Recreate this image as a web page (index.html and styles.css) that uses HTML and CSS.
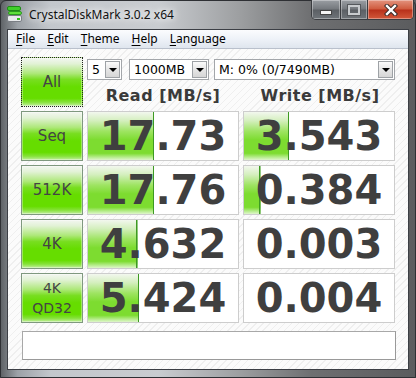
FILE: index.html
```html
<!DOCTYPE html>
<html>

<head>
    <title>CrystalDiskMark 3.0.2 x64</title>
    <link rel="stylesheet" href="styles.css">
</head>

<body>

    <div class="window">
        <div class="titlebar">
            <svg class="app-icon" width="16" height="16" viewBox="0 0 16 16">
                <rect x="0.5" y="0.5" width="13" height="4" rx="1.5" fill="#3fcf2a" stroke="#1f8a18" stroke-width="1"/>
                <rect x="1.5" y="5.5" width="13" height="3" rx="1.5" fill="#5fe03a" stroke="#2a9a1f" stroke-width="1"/>
                <rect x="0.5" y="9.5" width="14" height="6" rx="1.5" fill="#e8eaec" stroke="#7a7e84" stroke-width="1"/>
                <rect x="10" y="12" width="3" height="2" fill="#31c21d"/>
            </svg>
            <span class="title">CrystalDiskMark 3.0.2 x64</span>
            <div class="caption">
                <span class="cap-btn min"><i></i></span>
                <span class="cap-btn max"><i></i></span>
                <span class="cap-btn close">
                    <svg width="14" height="12" viewBox="0 0 14 12">
                        <path d="M3 2 L11 10 M11 2 L3 10" stroke="#3a2a28" stroke-width="4.4" stroke-linecap="square"/>
                        <path d="M3 2 L11 10 M11 2 L3 10" stroke="#ffffff" stroke-width="2.4" stroke-linecap="square"/>
                    </svg>
                </span>
            </div>
        </div>

        <div class="frame">
            <ul class="menu">
                <li><u>F</u>ile</li>
                <li><u>E</u>dit</li>
                <li><u>T</u>heme</li>
                <li><u>H</u>elp</li>
                <li><u>L</u>anguage</li>
            </ul>

            <div class="client">
                <div class="board">
                    <div class="btn all">All</div>
                    <div class="controls">
                        <div class="combos">
                            <div class="combo count"><span>5</span><b></b></div>
                            <div class="combo size"><span>1000MB</span><b></b></div>
                            <div class="combo drive"><span>M: 0% (0/7490MB)</span><b></b></div>
                        </div>
                        <div class="heads">
                            <span>Read [MB/s]</span>
                            <span>Write [MB/s]</span>
                        </div>
                    </div>

                    <div class="btn">Seq</div>
                    <div class="cell" style="--w:44%">17.73</div>
                    <div class="cell" style="--w:30%">3.543</div>

                    <div class="btn">512K</div>
                    <div class="cell" style="--w:44%">17.76</div>
                    <div class="cell" style="--w:11%">0.384</div>

                    <div class="btn">4K</div>
                    <div class="cell" style="--w:33%">4.632</div>
                    <div class="cell" style="--w:0%">0.003</div>

                    <div class="btn two">4K<br>QD32</div>
                    <div class="cell" style="--w:34%">5.424</div>
                    <div class="cell" style="--w:0%">0.004</div>
                </div>
                <div class="comment"></div>
            </div>
        </div>
    </div>

</body>

</html>
```

FILE: styles.css
```css
* {
    margin: 0;
    padding: 0;
    list-style: none;
    box-sizing: border-box;
}

body {
    background: #5a5c60;
    width: 416px;
    height: 378px;
    overflow: hidden;
}

.window {
    width: 416px;
    height: 378px;
    display: flex;
    flex-direction: column;
    border: 1px solid #2e3034;
    border-radius: 6px 6px 0 0;
    background: linear-gradient(to right, #5f6367 0%, #9ca1a7 4%, #c3c7cc 12%, #c9ccd0 38%, #9c9ea0 58%, #6e6f71 75%, #5b5c5e 100%);
}

/* title bar */
.titlebar {
    height: 28px;
    display: flex;
    align-items: flex-start;
    padding-left: 6px;
}

.app-icon {
    margin-top: 5px;
}

.title {
    margin: 6px 0 0 6px;
    font-family: "Noto Sans", sans-serif;
    font-size: 12px;
    line-height: 16px;
    color: #111;
    text-shadow: 0 0 6px #fff, 0 0 10px #fff;
}

.caption {
    margin-left: auto;
    margin-right: 1px;
    margin-top: -1px;
    display: flex;
    height: 20px;
    border: 1px solid #3a3c40;
    border-top: none;
    border-radius: 0 0 5px 5px;
    overflow: hidden;
}

.cap-btn {
    display: flex;
    align-items: center;
    justify-content: center;
    height: 19px;
    border-left: 1px solid #3a3c40;
    box-shadow: inset 0 0 0 1px rgba(255, 255, 255, 0.35);
}

.cap-btn.min {
    width: 28px;
    border-left: none;
    background: linear-gradient(#9a9ea3, #74787d 48%, #5b5f64 52%, #6f7479);
}

.cap-btn.max {
    width: 27px;
    background: linear-gradient(#9a9ea3, #74787d 48%, #5b5f64 52%, #6f7479);
}

.cap-btn.close {
    width: 46px;
    background: linear-gradient(#e3937e, #cf5a3d 48%, #b8301a 52%, #d2583a);
}

.cap-btn.min i {
    width: 10px;
    height: 3px;
    margin-top: 5px;
    background: #f4f4f4;
    border: 1px solid #444;
    box-sizing: content-box;
}

.cap-btn.max i {
    width: 8px;
    height: 6px;
    border: 2px solid #c8cbce;
    outline: 1px solid #55585c;
    box-sizing: content-box;
}

/* client frame */
.frame {
    flex: 1;
    margin: 0 6px 7px 6px;
    border: 1px solid #3c3f45;
    display: flex;
    flex-direction: column;
    background: #fff;
}

.menu {
    height: 19px;
    display: flex;
    padding-left: 2px;
    border-bottom: 1px solid #b9c0cc;
    background: linear-gradient(#fbfcfe, #eef2f8 50%, #dfe5ee);
    font-family: "Noto Sans", sans-serif;
    font-size: 12px;
    line-height: 18px;
    color: #000;
}

.menu li {
    padding: 0 6px;
}

.menu u {
    text-underline-offset: 2px;
}

.client {
    flex: 1;
    padding: 8px 0 0 13px;
    background-color: #fafafa;
    background-image: repeating-linear-gradient(135deg, #fbfbfb 0 4px, #efefef 4px 5px);
}

.board {
    display: grid;
    grid-template-columns: 62px 152px 153px;
    grid-template-rows: repeat(5, 50px);
    column-gap: 4px;
    row-gap: 4px;
}

.btn {
    display: flex;
    align-items: center;
    justify-content: center;
    text-align: center;
    border: 1px solid #7f987f;
    background: linear-gradient(#f3f6f1 0%, #e2f2d6 12%, #aee87a 32%, #78de20 45%, #66dd00 60%, #66dd00 84%, #86e23a 92%, #c4efa2 100%);
    box-shadow: inset 0 0 0 1px rgba(255, 255, 255, 0.35);
    font-family: "DejaVu Sans", sans-serif;
    font-size: 15px;
    line-height: 20px;
    color: #444;
}

.btn.all {
    border: 1px dotted #222;
}

.btn.two {
    font-size: 14px;
}

.controls {
    grid-column: 2 / 4;
    display: flex;
    flex-direction: column;
}

.combos {
    display: flex;
    margin-top: 2px;
}

.combo {
    height: 21px;
    display: flex;
    align-items: center;
    padding: 0 1px 0 4px;
    border: 1px solid #a3a6aa;
    background: #fff;
    font-family: "DejaVu Sans", sans-serif;
    font-size: 12.5px;
    color: #000;
}

.combo span {
    flex: 1;
}

.combo b {
    width: 15px;
    height: 17px;
    border: 1px solid #9ea2a6;
    background: linear-gradient(#fbfbfb, #e6e6e6 50%, #d6d6d6);
    display: flex;
    align-items: center;
    justify-content: center;
}

.combo b::after {
    content: "";
    border-left: 4px solid transparent;
    border-right: 4px solid transparent;
    border-top: 4px solid #000;
    margin-top: 1px;
}

.combo.count {
    width: 35px;
}

.combo.size {
    width: 80px;
    margin-left: 7px;
}

.combo.drive {
    width: 181px;
    margin-left: 5px;
}

.heads {
    display: flex;
    margin-top: 6px;
    font-family: "DejaVu Sans", sans-serif;
    font-weight: bold;
    font-size: 16px;
    line-height: 20px;
    letter-spacing: 0.5px;
    color: #3a3a3a;
}

.heads span {
    width: 152px;
    text-align: center;
}

.heads span + span {
    margin-left: 5px;
}

.cell {
    --w: 0%;
    display: flex;
    align-items: center;
    justify-content: center;
    border: 1px solid #cdcdcd;
    background-color: #fff;
    background-image:
        linear-gradient(to left, #3d9a22 1px, transparent 1px),
        linear-gradient(#f2f7ee 0%, #d4efbe 18%, #9ee462 40%, #7ddc30 58%, #7ddc30 86%, #b5ec8a 94%, #dff6cc 100%);
    background-size: var(--w) 100%;
    background-repeat: no-repeat;
    font-family: "DejaVu Sans", sans-serif;
    font-weight: bold;
    font-size: 40px;
    color: #3f3f3f;
}

.board .cell:nth-child(3n+2) {
    width: 152px;
}

.board .cell:nth-child(3n) {
    width: 152px;
    justify-self: end;
}

.comment {
    margin: 8px 0 0 1px;
    width: 374px;
    height: 29px;
    border: 1px solid #a8a8a8;
    border-right-color: #999;
    border-bottom-color: #999;
    background: #fff;
}
```
